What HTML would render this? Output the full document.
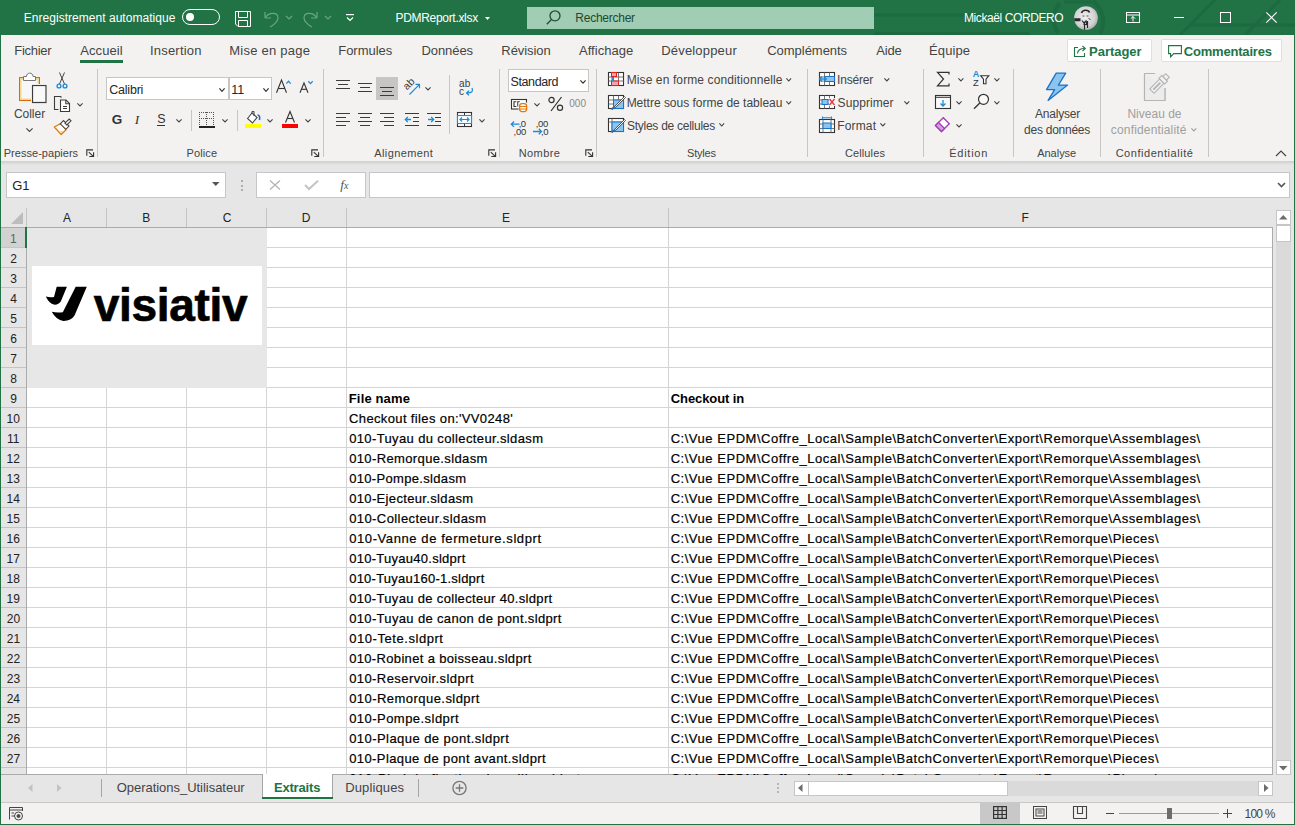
<!DOCTYPE html>
<html><head><meta charset="utf-8"><style>
html,body{margin:0;padding:0;width:1295px;height:825px;overflow:hidden;background:#f3f2f1;font-family:"Liberation Sans", sans-serif}
body>div,body>span,body>svg{position:absolute;box-sizing:border-box}
.t{white-space:pre;line-height:1}
svg{overflow:visible}
</style></head><body>
<div style="left:0px;top:0px;width:1295px;height:35px;background:#217346"></div>
<svg style="left:0px;top:0px;" width="1295" height="35" viewBox="0 0 1295 35"><g stroke="#1d6a40" fill="none" stroke-width="3">
<path d="M874 15 H1010"/>
<path d="M874 33.5 H1030"/>
<path d="M1060 3 A24 24 0 0 0 1058 33" stroke-width="4"/>
<path d="M1093 1 A26 26 0 0 1 1100 34" stroke-width="4"/>
<path d="M1064 2 H1092" stroke-width="3"/>
<path d="M1190 25 H1295"/>
<path d="M1180 35 L1215 0"/><path d="M1245 35 L1280 0"/>
</g></svg>
<span class="t" style="left:23.84px;top:12.19px;font-size:12px;color:#fff;font-weight:400;letter-spacing:0.029px;">Enregistrement automatique</span>
<div style="left:182px;top:9px;width:38px;height:16px;border:1px solid #fff;border-radius:8px"></div>
<div style="left:186px;top:13px;width:8px;height:8px;background:#fff;border-radius:50%"></div>
<svg style="left:235px;top:11px;" width="17" height="17" viewBox="0 0 17 17"><g fill="none" stroke="#fff" stroke-width="1"><path d="M0.5 0.5H15.5V15.5H3L0.5 13Z"/><path d="M3.5 0.5V6.5H12.5V0.5"/><path d="M3.5 15.5V9.5H12.5V15.5"/></g></svg>
<svg style="left:264px;top:11px;" width="70" height="17" viewBox="0 0 70 17"><g fill="none" stroke="#6aa583" stroke-width="1.2"><path d="M1 7 L1 1 M1 7 L7 7"/><path d="M1.5 6.5 C5 1 14 1 14 7 C14 10 10 14 6 16"/><path d="M22 5 L25 8 L28 5"/><path d="M53 7 L53 1 M53 7 L47 7"/><path d="M52.5 6.5 C49 1 40 1 40 7 C40 10 44 14 48 16"/><path d="M61 5 L64 8 L67 5"/></g></svg>
<svg style="left:346px;top:14px;" width="8" height="8" viewBox="0 0 8 8"><g fill="none" stroke="#fff" stroke-width="1.2"><path d="M0 0.6H8"/><path d="M1 3.5 L4 6.5 L7 3.5"/></g></svg>
<span class="t" style="left:395.44px;top:12.19px;font-size:12px;color:#fff;font-weight:400;letter-spacing:-0.305px;">PDMReport.xlsx</span>
<svg style="left:485px;top:17px;" width="6" height="4" viewBox="0 0 6 4"><path d="M0 0H5L2.5 3Z" fill="#fff"/></svg>
<div style="left:527px;top:7px;width:347px;height:22px;background:#a1cdb4"></div>
<svg style="left:546px;top:10px;" width="15" height="15" viewBox="0 0 15 15"><g fill="none" stroke="#1e4d33" stroke-width="1.3"><circle cx="9" cy="5.8" r="5"/><path d="M5.5 9.5 L0.8 14.2"/></g></svg>
<span class="t" style="left:575.34px;top:12.19px;font-size:12px;color:#1c4a31;font-weight:400;letter-spacing:-0.251px;">Rechercher</span>
<span class="t" style="left:964.04px;top:12.19px;font-size:12px;color:#fff;font-weight:400;letter-spacing:-0.414px;">Mickaël CORDERO</span>
<svg style="left:1074px;top:6px;" width="24" height="24" viewBox="0 0 24 24"><defs><radialGradient id="av" cx="45%" cy="45%" r="60%"><stop offset="0" stop-color="#f0f0f0"/><stop offset="0.7" stop-color="#d2d2d2"/><stop offset="1" stop-color="#a8a8a8"/></radialGradient><clipPath id="avc"><circle cx="12" cy="12" r="11.85"/></clipPath></defs>
<circle cx="12" cy="12" r="11.85" fill="url(#av)"/>
<g clip-path="url(#avc)" fill="none" stroke="#2a2a2a">
<path d="M7.5 7 C8.5 3.5 14.5 3.5 15.5 6.5" stroke-width="1.6"/>
<path d="M8.5 10 H10.5 M12.5 10 H14.5" stroke-width="1.2" stroke="#555"/>
<path d="M0 13.8 H6.5" stroke-width="3"/>
<path d="M8 14.5 L10 17 L12 15 L13 19 M13.5 15 V22 M9.5 18.5 H13 M10.5 17 V24" stroke-width="1.2"/>
<path d="M14.5 12 L16.5 14" stroke-width="1" stroke="#444"/>
</g></svg>
<svg style="left:1126px;top:12px;" width="14" height="11" viewBox="0 0 14 11"><g fill="none" stroke="#fff" stroke-width="1"><rect x="0.5" y="0.5" width="13" height="10"/><path d="M0.5 3H13.5"/><path d="M7 9.5V4.5 M4.8 6.7 L7 4.5 L9.2 6.7"/></g></svg>
<svg style="left:1174px;top:17px;" width="10" height="2" viewBox="0 0 10 2"><path d="M0 0.5H10" stroke="#fff" stroke-width="1"/></svg>
<svg style="left:1220px;top:12px;" width="11" height="11" viewBox="0 0 11 11"><rect x="0.5" y="0.5" width="10" height="10" fill="none" stroke="#fff" stroke-width="1"/></svg>
<svg style="left:1266px;top:12px;" width="11" height="11" viewBox="0 0 11 11"><path d="M0.3 0.3L10.7 10.7M10.7 0.3L0.3 10.7" stroke="#fff" stroke-width="1.1"/></svg>
<div style="left:1px;top:35px;width:1293px;height:126px;background:#f3f2f1"></div>
<span class="t" style="left:14.26px;top:44.35px;font-size:13px;color:#444;font-weight:400;letter-spacing:-0.288px;">Fichier</span>
<span class="t" style="left:80.30px;top:44.35px;font-size:13px;color:#444;font-weight:400;letter-spacing:0.070px;">Accueil</span>
<span class="t" style="left:150.03px;top:44.35px;font-size:13px;color:#444;font-weight:400;letter-spacing:0.195px;">Insertion</span>
<span class="t" style="left:229.26px;top:44.35px;font-size:13px;color:#444;font-weight:400;letter-spacing:0.242px;">Mise en page</span>
<span class="t" style="left:338.26px;top:44.35px;font-size:13px;color:#444;font-weight:400;letter-spacing:-0.036px;">Formules</span>
<span class="t" style="left:421.46px;top:44.35px;font-size:13px;color:#444;font-weight:400;letter-spacing:-0.073px;">Données</span>
<span class="t" style="left:501.36px;top:44.35px;font-size:13px;color:#444;font-weight:400;letter-spacing:-0.081px;">Révision</span>
<span class="t" style="left:579.00px;top:44.35px;font-size:13px;color:#444;font-weight:400;letter-spacing:0.021px;">Affichage</span>
<span class="t" style="left:661.26px;top:44.35px;font-size:13px;color:#444;font-weight:400;letter-spacing:0.176px;">Développeur</span>
<span class="t" style="left:767.25px;top:44.35px;font-size:13px;color:#444;font-weight:400;letter-spacing:-0.034px;">Compléments</span>
<span class="t" style="left:876.30px;top:44.35px;font-size:13px;color:#444;font-weight:400;letter-spacing:-0.193px;">Aide</span>
<span class="t" style="left:929.06px;top:44.35px;font-size:13px;color:#444;font-weight:400;letter-spacing:0.106px;">Équipe</span>
<div style="left:80px;top:60px;width:43px;height:3px;background:#217346"></div>
<div style="left:1067px;top:39px;width:85px;height:23px;background:#fff;border:1px solid #e1dfdd;border-radius:2px"></div>
<div style="left:1161px;top:39px;width:121px;height:23px;background:#fff;border:1px solid #e1dfdd;border-radius:2px"></div>
<svg style="left:1073px;top:44px;" width="14" height="14" viewBox="0 0 14 14"><g fill="none" stroke="#217346" stroke-width="1.1"><path d="M5 3.5H1.5V12.5H11.5V9"/><path d="M4.5 9.5 C4.5 6 7.5 4.5 11.5 4.5"/><path d="M9.5 2 L12.3 4.5 L9.5 7"/></g></svg>
<span class="t" style="left:1089.09px;top:44.75px;font-size:13px;color:#217346;font-weight:700;letter-spacing:-0.034px;">Partager</span>
<svg style="left:1168px;top:45px;" width="14" height="13" viewBox="0 0 14 13"><path d="M0.6 0.6H13.4V8.6H5.8L2.6 11.8V8.6H0.6Z" fill="none" stroke="#217346" stroke-width="1.1"/></svg>
<span class="t" style="left:1183.68px;top:44.75px;font-size:13px;color:#217346;font-weight:700;letter-spacing:-0.183px;">Commentaires</span>
<div style="left:97px;top:69px;width:1px;height:88px;background:#c8c6c4"></div>
<div style="left:323px;top:69px;width:1px;height:88px;background:#c8c6c4"></div>
<div style="left:499px;top:69px;width:1px;height:88px;background:#c8c6c4"></div>
<div style="left:596px;top:69px;width:1px;height:88px;background:#c8c6c4"></div>
<div style="left:807px;top:69px;width:1px;height:88px;background:#c8c6c4"></div>
<div style="left:923px;top:69px;width:1px;height:88px;background:#c8c6c4"></div>
<div style="left:1013px;top:69px;width:1px;height:88px;background:#c8c6c4"></div>
<div style="left:1100px;top:69px;width:1px;height:88px;background:#c8c6c4"></div>
<div style="left:1208px;top:69px;width:1px;height:88px;background:#c8c6c4"></div>
<span class="t" style="left:3.72px;top:148.04px;font-size:11px;color:#444;font-weight:400;letter-spacing:0.031px;">Presse-papiers</span>
<span class="t" style="left:186.42px;top:148.04px;font-size:11px;color:#444;font-weight:400;letter-spacing:0.140px;">Police</span>
<span class="t" style="left:374.30px;top:148.04px;font-size:11px;color:#444;font-weight:400;letter-spacing:0.390px;">Alignement</span>
<span class="t" style="left:518.72px;top:148.04px;font-size:11px;color:#444;font-weight:400;letter-spacing:0.414px;">Nombre</span>
<span class="t" style="left:687.05px;top:148.04px;font-size:11px;color:#444;font-weight:400;letter-spacing:-0.206px;">Styles</span>
<span class="t" style="left:844.95px;top:148.04px;font-size:11px;color:#444;font-weight:400;letter-spacing:0.119px;">Cellules</span>
<span class="t" style="left:949.22px;top:148.04px;font-size:11px;color:#444;font-weight:400;letter-spacing:0.748px;">Édition</span>
<span class="t" style="left:1037.20px;top:148.04px;font-size:11px;color:#444;font-weight:400;letter-spacing:-0.018px;">Analyse</span>
<span class="t" style="left:1115.65px;top:148.04px;font-size:11px;color:#444;font-weight:400;letter-spacing:0.540px;">Confidentialité</span>
<svg style="left:86px;top:149px;" width="9" height="9" viewBox="0 0 9 9"><g fill="none" stroke="#333" stroke-width="1.1"><path d="M0.8 6.8V0.9H7"/><path d="M2.8 3.2L7.3 7.3"/><path d="M3.3 7.5H7.6V3.2"/></g></svg>
<svg style="left:311px;top:149px;" width="9" height="9" viewBox="0 0 9 9"><g fill="none" stroke="#333" stroke-width="1.1"><path d="M0.8 6.8V0.9H7"/><path d="M2.8 3.2L7.3 7.3"/><path d="M3.3 7.5H7.6V3.2"/></g></svg>
<svg style="left:488px;top:149px;" width="9" height="9" viewBox="0 0 9 9"><g fill="none" stroke="#333" stroke-width="1.1"><path d="M0.8 6.8V0.9H7"/><path d="M2.8 3.2L7.3 7.3"/><path d="M3.3 7.5H7.6V3.2"/></g></svg>
<svg style="left:585px;top:149px;" width="9" height="9" viewBox="0 0 9 9"><g fill="none" stroke="#333" stroke-width="1.1"><path d="M0.8 6.8V0.9H7"/><path d="M2.8 3.2L7.3 7.3"/><path d="M3.3 7.5H7.6V3.2"/></g></svg>
<svg style="left:12px;top:68px;" width="40" height="40" viewBox="0 0 40 40">
<rect x="7.5" y="9.5" width="20" height="23" fill="#f7d58c" stroke="#d86b07" stroke-width="1"/>
<rect x="9.5" y="12" width="16" height="18.5" fill="#f7f7f7"/>
<path d="M11.5 12.5 V8.5 H14.5 C14.5 4 21 4 21 8.5 H23.5 V12.5 Z" fill="#fff" stroke="#777" stroke-width="1"/>
<rect x="19" y="16" width="16" height="19" fill="#fff"/>
<rect x="20.5" y="17.5" width="13.5" height="17" fill="#f9f9f9" stroke="#3c3c3c" stroke-width="1.2"/>
</svg>
<span class="t" style="left:13.90px;top:108.19px;font-size:12px;color:#444;font-weight:400;letter-spacing:-0.020px;">Coller</span>
<svg style="left:26px;top:128px;" width="7" height="4.5" viewBox="0 0 7 4.5"><path d="M0.4 0.4 L3.5 3.5 L6.6 0.4" fill="none" stroke="#444" stroke-width="1.1"/></svg>
<svg style="left:55px;top:70px;" width="14" height="20" viewBox="0 0 14 20"><g fill="none" stroke="#444" stroke-width="1"><path d="M4.5 2.5 L9.5 14"/><path d="M9.5 2.5 L4.5 14"/></g>
<g fill="none" stroke="#1e8bd8" stroke-width="1.4"><circle cx="4" cy="16" r="1.9"/><circle cx="10" cy="16" r="1.9"/></g></svg>
<svg style="left:53px;top:95px;" width="18" height="18" viewBox="0 0 18 18"><g fill="none" stroke="#3c3c3c" stroke-width="1.1">
<path d="M5.5 14.5 H1.5 V1.5 H7.5 L8.5 2.5"/>
<path d="M7.5 16.5 V5 H13 L16.5 8.5 V16.5 Z" fill="#fff"/>
<path d="M12.8 5 V8.7 H16.5"/>
<path d="M10 11.5 H14 M10 13.5 H14"/></g></svg>
<svg style="left:76.5px;top:103px;" width="6" height="4" viewBox="0 0 6 4"><path d="M0.4 0.4 L3.0 3 L5.6 0.4" fill="none" stroke="#444" stroke-width="1.1"/></svg>
<svg style="left:53px;top:118px;" width="19" height="18" viewBox="0 0 19 18">
<path d="M1.3 9 L8.2 5.3 L13 11.7 L8.2 16.5 Z" fill="#fff" stroke="#e07a10" stroke-width="1.3" stroke-linejoin="round"/>
<path d="M5.5 13.2 L10.8 12.8 L8.2 15.6 Z" fill="#f7d58c"/>
<path d="M7.3 5.8 L10.5 2.6 L16 8.1 L12.8 11.3 Z" fill="#fff" stroke="#444" stroke-width="1.1"/>
<path d="M12 5.2 L16.2 1 L18 2.8 L13.8 7 Z" fill="#fff" stroke="#444" stroke-width="1.1"/>
</svg>
<div style="left:106px;top:77px;width:123px;height:23px;background:#fff;border:1px solid #c8c6c4"></div>
<div style="left:229px;top:77px;width:43px;height:23px;background:#fff;border:1px solid #c8c6c4"></div>
<span class="t" style="left:109.17px;top:83.77px;font-size:12.5px;color:#262626;font-weight:400;letter-spacing:-0.200px;">Calibri</span>
<svg style="left:219.4px;top:87.5px;" width="6" height="4.3" viewBox="0 0 6 4.3"><path d="M0.4 0.4 L3.0 3.3 L5.6 0.4" fill="none" stroke="#333" stroke-width="1.2"/></svg>
<span class="t" style="left:231.30px;top:83.77px;font-size:12.5px;color:#262626;font-weight:400;letter-spacing:0.000px;">11</span>
<svg style="left:262.5px;top:87.5px;" width="6" height="4.3" viewBox="0 0 6 4.3"><path d="M0.4 0.4 L3.0 3.3 L5.6 0.4" fill="none" stroke="#333" stroke-width="1.2"/></svg>
<svg style="left:275px;top:79px;" width="40" height="15" viewBox="0 0 40 15"><g fill="none" stroke="#333" stroke-width="1.1">
<path d="M1.5 13.8 L6.5 1 L11.5 13.8"/><path d="M3.3 9.5 H9.7"/>
<path d="M25 13.8 L29 4 L33 13.8"/><path d="M26.5 10.3 H31.5"/></g>
<g fill="none" stroke="#1e8bd8" stroke-width="1.3"><path d="M11.3 4.6 L13.5 2.3 L15.7 4.6"/><path d="M33.3 2.3 L35.5 4.6 L37.7 2.3"/></g></svg>
<span class="t" style="left:111.86px;top:112.72px;font-size:13.5px;color:#333;font-weight:700;letter-spacing:0.000px;">G</span>
<span class="t" style="left:134.78px;top:112.52px;font-size:13.5px;color:#333;font-weight:400;letter-spacing:0.000px;font-family:'Liberation Serif';font-style:italic">I</span>
<span class="t" style="left:157.18px;top:113.37px;font-size:12.5px;color:#333;font-weight:400;letter-spacing:0.000px;">S</span>
<div style="left:157px;top:125px;width:8px;height:1.2px;background:#333"></div>
<svg style="left:175.5px;top:119px;" width="6" height="4" viewBox="0 0 6 4"><path d="M0.4 0.4 L3.0 3 L5.6 0.4" fill="none" stroke="#444" stroke-width="1.1"/></svg>
<div style="left:191px;top:110px;width:1px;height:21px;background:#c8c6c4"></div>
<div style="left:199px;top:112px;width:1px;height:1px;background:#555"></div>
<div style="left:199px;top:114px;width:1px;height:1px;background:#555"></div>
<div style="left:199px;top:116px;width:1px;height:1px;background:#555"></div>
<div style="left:199px;top:118px;width:1px;height:1px;background:#555"></div>
<div style="left:199px;top:120px;width:1px;height:1px;background:#555"></div>
<div style="left:199px;top:122px;width:1px;height:1px;background:#555"></div>
<div style="left:199px;top:124px;width:1px;height:1px;background:#555"></div>
<div style="left:201px;top:112px;width:1px;height:1px;background:#555"></div>
<div style="left:201px;top:118px;width:1px;height:1px;background:#555"></div>
<div style="left:203px;top:112px;width:1px;height:1px;background:#555"></div>
<div style="left:203px;top:118px;width:1px;height:1px;background:#555"></div>
<div style="left:205px;top:112px;width:1px;height:1px;background:#555"></div>
<div style="left:205px;top:118px;width:1px;height:1px;background:#555"></div>
<div style="left:206px;top:112px;width:1px;height:1px;background:#555"></div>
<div style="left:206px;top:114px;width:1px;height:1px;background:#555"></div>
<div style="left:206px;top:116px;width:1px;height:1px;background:#555"></div>
<div style="left:206px;top:118px;width:1px;height:1px;background:#555"></div>
<div style="left:206px;top:120px;width:1px;height:1px;background:#555"></div>
<div style="left:206px;top:122px;width:1px;height:1px;background:#555"></div>
<div style="left:206px;top:124px;width:1px;height:1px;background:#555"></div>
<div style="left:207px;top:112px;width:1px;height:1px;background:#555"></div>
<div style="left:207px;top:118px;width:1px;height:1px;background:#555"></div>
<div style="left:209px;top:112px;width:1px;height:1px;background:#555"></div>
<div style="left:209px;top:118px;width:1px;height:1px;background:#555"></div>
<div style="left:211px;top:112px;width:1px;height:1px;background:#555"></div>
<div style="left:211px;top:118px;width:1px;height:1px;background:#555"></div>
<div style="left:213px;top:112px;width:1px;height:1px;background:#555"></div>
<div style="left:213px;top:114px;width:1px;height:1px;background:#555"></div>
<div style="left:213px;top:116px;width:1px;height:1px;background:#555"></div>
<div style="left:213px;top:118px;width:1px;height:1px;background:#555"></div>
<div style="left:213px;top:120px;width:1px;height:1px;background:#555"></div>
<div style="left:213px;top:122px;width:1px;height:1px;background:#555"></div>
<div style="left:213px;top:124px;width:1px;height:1px;background:#555"></div>
<div style="left:198.5px;top:126px;width:16px;height:1.5px;background:#222"></div>
<svg style="left:221.6px;top:119px;" width="6" height="4" viewBox="0 0 6 4"><path d="M0.4 0.4 L3.0 3 L5.6 0.4" fill="none" stroke="#444" stroke-width="1.1"/></svg>
<div style="left:237px;top:110px;width:1px;height:21px;background:#c8c6c4"></div>
<svg style="left:244px;top:110px;" width="19" height="19" viewBox="0 0 19 19">
<path d="M3.5 8.5 L8 3 L13 7.5 L8.5 13 Z" fill="#fff" stroke="#444" stroke-width="1.1"/>
<path d="M8 3 V1.5 H10 V6" fill="none" stroke="#444" stroke-width="1"/>
<path d="M13.5 5 C15.5 5 16 7 15.5 10" fill="none" stroke="#1e6fc0" stroke-width="1.6"/>
<rect x="1" y="14" width="16" height="4" fill="#ffff00"/></svg>
<svg style="left:267.3px;top:119px;" width="6" height="4" viewBox="0 0 6 4"><path d="M0.4 0.4 L3.0 3 L5.6 0.4" fill="none" stroke="#444" stroke-width="1.1"/></svg>
<svg style="left:281px;top:110px;" width="18" height="19" viewBox="0 0 18 19"><g fill="none" stroke="#333" stroke-width="1.1"><path d="M4.5 12.5 L9 1.5 L13.5 12.5"/><path d="M6.2 8.5 H11.8"/></g>
<rect x="1" y="14" width="16" height="4" fill="#ff0000"/></svg>
<svg style="left:304.5px;top:119px;" width="6" height="4" viewBox="0 0 6 4"><path d="M0.4 0.4 L3.0 3 L5.6 0.4" fill="none" stroke="#444" stroke-width="1.1"/></svg>
<div style="left:376px;top:77px;width:22px;height:23px;background:#c8c6c4"></div>
<div style="left:336px;top:80px;width:14px;height:1.2px;background:#3c3c3c"></div>
<div style="left:338px;top:84px;width:10px;height:1.2px;background:#3c3c3c"></div>
<div style="left:336px;top:88px;width:14px;height:1.2px;background:#3c3c3c"></div>
<div style="left:358px;top:83px;width:14px;height:1.2px;background:#3c3c3c"></div>
<div style="left:360px;top:87px;width:10px;height:1.2px;background:#3c3c3c"></div>
<div style="left:358px;top:91px;width:14px;height:1.2px;background:#3c3c3c"></div>
<div style="left:380px;top:87px;width:14px;height:1.2px;background:#3c3c3c"></div>
<div style="left:382px;top:91px;width:10px;height:1.2px;background:#3c3c3c"></div>
<div style="left:380px;top:95px;width:14px;height:1.2px;background:#3c3c3c"></div>
<div style="left:336px;top:113px;width:14px;height:1.2px;background:#3c3c3c"></div>
<div style="left:336px;top:117px;width:10px;height:1.2px;background:#3c3c3c"></div>
<div style="left:336px;top:121px;width:14px;height:1.2px;background:#3c3c3c"></div>
<div style="left:336px;top:125px;width:10px;height:1.2px;background:#3c3c3c"></div>
<div style="left:358px;top:113px;width:14px;height:1.2px;background:#3c3c3c"></div>
<div style="left:360px;top:117px;width:10px;height:1.2px;background:#3c3c3c"></div>
<div style="left:358px;top:121px;width:14px;height:1.2px;background:#3c3c3c"></div>
<div style="left:360px;top:125px;width:10px;height:1.2px;background:#3c3c3c"></div>
<div style="left:380px;top:113px;width:14px;height:1.2px;background:#3c3c3c"></div>
<div style="left:384px;top:117px;width:10px;height:1.2px;background:#3c3c3c"></div>
<div style="left:380px;top:121px;width:14px;height:1.2px;background:#3c3c3c"></div>
<div style="left:384px;top:125px;width:10px;height:1.2px;background:#3c3c3c"></div>
<div style="left:405px;top:113px;width:14px;height:1.2px;background:#3c3c3c"></div>
<div style="left:413px;top:117px;width:6px;height:1.2px;background:#3c3c3c"></div>
<div style="left:413px;top:121px;width:6px;height:1.2px;background:#3c3c3c"></div>
<div style="left:405px;top:125px;width:14px;height:1.2px;background:#3c3c3c"></div>
<div style="left:427px;top:113px;width:14px;height:1.2px;background:#3c3c3c"></div>
<div style="left:435px;top:117px;width:6px;height:1.2px;background:#3c3c3c"></div>
<div style="left:435px;top:121px;width:6px;height:1.2px;background:#3c3c3c"></div>
<div style="left:427px;top:125px;width:14px;height:1.2px;background:#3c3c3c"></div>
<svg style="left:403px;top:110px;" width="40" height="19" viewBox="0 0 40 19"><g fill="none" stroke="#1e8bd8" stroke-width="1.3">
<path d="M8 9.5 H2.3 M4.8 7 L2.3 9.5 L4.8 12"/>
<path d="M25 9.5 H30.7 M28.2 7 L30.7 9.5 L28.2 12"/></g></svg>
<svg style="left:402px;top:77px;" width="20" height="20" viewBox="0 0 20 20"><text x="0" y="0" transform="translate(5 13.5) rotate(-45)" font-family="Liberation Sans" font-size="10.5" fill="#3c3c3c">ab</text>
<path d="M7.5 17.5 L17.5 7.3 M13.5 7.3 H17.5 V11.3" fill="none" stroke="#1e8bd8" stroke-width="1.2"/></svg>
<svg style="left:424.7px;top:87px;" width="6" height="4" viewBox="0 0 6 4"><path d="M0.4 0.4 L3.0 3 L5.6 0.4" fill="none" stroke="#444" stroke-width="1.1"/></svg>
<div style="left:449px;top:75px;width:1px;height:59px;background:#c8c6c4"></div>
<svg style="left:457px;top:78px;" width="18" height="19" viewBox="0 0 18 19"><text x="2" y="9.3" font-family="Liberation Sans" font-size="10" fill="#3c3c3c" letter-spacing="0.3">ab</text>
<text x="2" y="16.6" font-family="Liberation Sans" font-size="10" fill="#3c3c3c">c</text>
<path d="M15 10 C16.5 13.5 15 15 10 15 M12 12.6 L9.5 15 L12 17.4" fill="none" stroke="#1e8bd8" stroke-width="1.3"/></svg>
<svg style="left:456px;top:111px;" width="17" height="17" viewBox="0 0 17 17"><rect x="1.5" y="1.5" width="14" height="14" fill="#fff" stroke="#333" stroke-width="1.1"/>
<path d="M8.5 1.5 V4.5 M8.5 12.5 V15.5" stroke="#333" stroke-width="1"/>
<rect x="1.5" y="4.5" width="14" height="8" fill="#fff" stroke="#1e8bd8" stroke-width="1.1"/>
<path d="M4 8.5 H13 M6 6.5 L4 8.5 L6 10.5 M11 6.5 L13 8.5 L11 10.5" fill="none" stroke="#1e8bd8" stroke-width="1.2"/></svg>
<svg style="left:479.4px;top:119px;" width="6" height="4" viewBox="0 0 6 4"><path d="M0.4 0.4 L3.0 3 L5.6 0.4" fill="none" stroke="#444" stroke-width="1.1"/></svg>
<div style="left:508px;top:69px;width:81px;height:23px;background:#fff;border:1px solid #c8c6c4"></div>
<span class="t" style="left:510.57px;top:75.77px;font-size:12.5px;color:#262626;font-weight:400;letter-spacing:-0.407px;">Standard</span>
<svg style="left:579.8px;top:79.6px;" width="6" height="4.1" viewBox="0 0 6 4.1"><path d="M0.4 0.4 L3.0 3.1 L5.6 0.4" fill="none" stroke="#333" stroke-width="1.2"/></svg>
<svg style="left:510px;top:98px;" width="19" height="15" viewBox="0 0 19 15"><rect x="1.5" y="1.5" width="15" height="9.5" fill="#fff" stroke="#333" stroke-width="1.1"/>
<path d="M6.3 3.8 H4 V8.5 H6.3 M9.8 3.8 H7.8 V8.5" fill="none" stroke="#333" stroke-width="1.1"/>
<rect x="8.5" y="4.5" width="9" height="10" fill="#f3f2f1"/>
<rect x="9.6" y="5.6" width="7" height="8" rx="2.5" fill="#fff" stroke="#e07a10" stroke-width="1.3"/>
<path d="M9.8 8.5 H16.4 M9.8 11 H16.4" stroke="#e07a10" stroke-width="1.1"/></svg>
<svg style="left:533.5px;top:102.7px;" width="6" height="4" viewBox="0 0 6 4"><path d="M0.4 0.4 L3.0 3 L5.6 0.4" fill="none" stroke="#444" stroke-width="1.1"/></svg>
<svg style="left:548px;top:96px;" width="16" height="16" viewBox="0 0 16 16"><g fill="none" stroke="#333" stroke-width="1.2"><circle cx="3.5" cy="4" r="2.6"/><circle cx="12" cy="11.8" r="2.6"/><path d="M13.5 1 L3 15"/></g></svg>
<span class="t" style="left:569.20px;top:98.88px;font-size:10px;color:#888;font-weight:400;letter-spacing:0.050px;">000</span>
<svg style="left:509px;top:118px;" width="42" height="18" viewBox="0 0 42 18"><g fill="none" stroke="#1e8bd8" stroke-width="1.3">
<path d="M10.5 6.2 H2.3 M5 3.5 L2.3 6.2 L5 8.9"/>
<path d="M24 13.5 H32.5 M29.8 10.8 L32.5 13.5 L29.8 16.2"/></g></svg>
<span class="t" style="left:518.64px;top:118.81px;font-size:9.5px;color:#333;font-weight:400;letter-spacing:-0.445px;">,0</span>
<span class="t" style="left:513.54px;top:127.01px;font-size:9.5px;color:#333;font-weight:400;letter-spacing:-0.285px;">,00</span>
<span class="t" style="left:535.75px;top:118.81px;font-size:9.5px;color:#333;font-weight:400;letter-spacing:-0.285px;">,00</span>
<span class="t" style="left:540.94px;top:127.01px;font-size:9.5px;color:#333;font-weight:400;letter-spacing:-0.445px;">,0</span>
<svg style="left:607px;top:71px;" width="18" height="16" viewBox="0 0 18 16"><rect x="1.5" y="1.5" width="15" height="13" fill="#fff" stroke="#333" stroke-width="1.1"/>
<path d="M6.5 1.5 V14.5 M11.5 1.5 V14.5 M1.5 6 H16.5 M1.5 10 H16.5" stroke="#666" stroke-width="0.9"/>
<rect x="4.5" y="1.5" width="5" height="4" fill="#f4a3a8" stroke="#e02020" stroke-width="1"/>
<rect x="4.5" y="10" width="7" height="4.5" fill="#f4a3a8" stroke="#e02020" stroke-width="1"/>
<rect x="4.5" y="6" width="2" height="4" fill="#1e8bd8"/></svg>
<svg style="left:607px;top:94px;" width="19" height="16" viewBox="0 0 19 16"><rect x="1.5" y="1.5" width="15" height="13" fill="#fff" stroke="#333" stroke-width="1.1"/>
<path d="M6.5 1.5 V14.5 M11.5 1.5 V14.5 M1.5 6 H16.5 M1.5 10 H16.5" stroke="#666" stroke-width="0.9"/>
<rect x="6.5" y="6" width="10" height="8.5" fill="#8cc4f0" stroke="#1a73c6" stroke-width="1"/>
<path d="M5 15.5 L8 12 L17.5 2.5 L18.5 3.5 L9 13 Z" fill="#fff" stroke="#444" stroke-width="0.9"/>
<path d="M3.5 15.5 C5 13 6.5 12 8 12.5 C8 14 6 15.5 3.5 15.5Z" fill="#1a73c6"/></svg>
<svg style="left:607px;top:117px;" width="19" height="16" viewBox="0 0 19 16"><rect x="1.5" y="1.5" width="15" height="13" fill="#fff" stroke="#333" stroke-width="1.1"/>
<path d="M1.5 5 H16.5 M5 1.5 V14.5" stroke="#666" stroke-width="0.9"/>
<rect x="5" y="5" width="11.5" height="9.5" fill="#8cc4f0" stroke="#1a73c6" stroke-width="1"/>
<path d="M5 15.5 L8 12 L17.5 2.5 L18.5 3.5 L9 13 Z" fill="#fff" stroke="#444" stroke-width="0.9"/>
<path d="M3.5 15.5 C5 13 6.5 12 8 12.5 C8 14 6 15.5 3.5 15.5Z" fill="#1a73c6"/></svg>
<span class="t" style="left:626.64px;top:73.99px;font-size:12px;color:#444;font-weight:400;letter-spacing:0.115px;">Mise en forme conditionnelle</span>
<svg style="left:786.2px;top:77.7px;" width="5.5" height="4" viewBox="0 0 5.5 4"><path d="M0.4 0.4 L2.75 3 L5.1 0.4" fill="none" stroke="#444" stroke-width="1.1"/></svg>
<span class="t" style="left:626.64px;top:96.69px;font-size:12px;color:#444;font-weight:400;letter-spacing:-0.012px;">Mettre sous forme de tableau</span>
<svg style="left:786.2px;top:100.5px;" width="5.5" height="4" viewBox="0 0 5.5 4"><path d="M0.4 0.4 L2.75 3 L5.1 0.4" fill="none" stroke="#444" stroke-width="1.1"/></svg>
<span class="t" style="left:627.00px;top:119.69px;font-size:12px;color:#444;font-weight:400;letter-spacing:-0.264px;">Styles de cellules</span>
<svg style="left:719.2px;top:123.4px;" width="5.5" height="4" viewBox="0 0 5.5 4"><path d="M0.4 0.4 L2.75 3 L5.1 0.4" fill="none" stroke="#444" stroke-width="1.1"/></svg>
<svg style="left:818px;top:71px;" width="18" height="16" viewBox="0 0 18 16"><rect x="1.5" y="1.5" width="15" height="13" fill="#fff" stroke="#333" stroke-width="1.1"/><path d="M6.5 1.5 V14.5 M11.5 1.5 V14.5 M1.5 6 H16.5 M1.5 10 H16.5" stroke="#666" stroke-width="0.9"/><rect x="7" y="5.5" width="9.5" height="5" fill="#8cc4f0" stroke="#1a73c6" stroke-width="1"/>
<path d="M9 8 H1.5 M4 5.5 L1.5 8 L4 10.5" fill="none" stroke="#1e8bd8" stroke-width="1.3"/></svg>
<svg style="left:818px;top:94px;" width="18" height="16" viewBox="0 0 18 16"><rect x="1.5" y="1.5" width="15" height="13" fill="#fff" stroke="#333" stroke-width="1.1"/><path d="M6.5 1.5 V14.5 M11.5 1.5 V14.5 M1.5 6 H16.5 M1.5 10 H16.5" stroke="#666" stroke-width="0.9"/><rect x="4" y="5.5" width="6" height="5" fill="#8cc4f0" stroke="#1a73c6" stroke-width="1"/>
<rect x="11" y="4" width="7" height="8" fill="#f3f2f1"/>
<path d="M11.5 5 L16.5 11 M16.5 5 L11.5 11" stroke="#e8303a" stroke-width="1.2"/></svg>
<svg style="left:818px;top:116px;" width="18" height="17" viewBox="0 0 18 17"><rect x="1.5" y="3.5" width="15" height="13" fill="#fff" stroke="#333" stroke-width="1.1"/>
<path d="M5 3.5 V16.5 M13 3.5 V16.5 M1.5 8 H16.5 M1.5 12.5 H16.5" stroke="#666" stroke-width="0.9"/>
<rect x="5" y="7" width="8" height="5.5" fill="#8cc4f0" stroke="#1a73c6" stroke-width="1"/>
<path d="M4.5 1.8 H13.5 M4.5 0.5 V3 M13.5 0.5 V3" stroke="#1e8bd8" stroke-width="1.1"/></svg>
<span class="t" style="left:837.12px;top:73.99px;font-size:12px;color:#444;font-weight:400;letter-spacing:-0.203px;">Insérer</span>
<svg style="left:883.6px;top:77.9px;" width="5.7" height="4" viewBox="0 0 5.7 4"><path d="M0.4 0.4 L2.85 3 L5.3 0.4" fill="none" stroke="#444" stroke-width="1.1"/></svg>
<span class="t" style="left:837.60px;top:96.69px;font-size:12px;color:#444;font-weight:400;letter-spacing:0.075px;">Supprimer</span>
<svg style="left:903.9px;top:100.7px;" width="5.7" height="4" viewBox="0 0 5.7 4"><path d="M0.4 0.4 L2.85 3 L5.3 0.4" fill="none" stroke="#444" stroke-width="1.1"/></svg>
<span class="t" style="left:837.24px;top:120.19px;font-size:12px;color:#444;font-weight:400;letter-spacing:0.148px;">Format</span>
<svg style="left:879.9px;top:123.3px;" width="5.7" height="4" viewBox="0 0 5.7 4"><path d="M0.4 0.4 L2.85 3 L5.3 0.4" fill="none" stroke="#444" stroke-width="1.1"/></svg>
<svg style="left:936px;top:71px;" width="14" height="16" viewBox="0 0 14 16"><path d="M13 3.5 V1.3 H1.5 L7.5 8 L1.5 14.8 H13 V12.5" fill="none" stroke="#333" stroke-width="1.2"/></svg>
<svg style="left:957.6px;top:78px;" width="5.8" height="3.9" viewBox="0 0 5.8 3.9"><path d="M0.4 0.4 L2.9 2.9 L5.3999999999999995 0.4" fill="none" stroke="#444" stroke-width="1.1"/></svg>
<span class="t" style="left:972.63px;top:70.43px;font-size:9px;color:#1e8bd8;font-weight:700;letter-spacing:0.000px;">A</span>
<span class="t" style="left:972.92px;top:79.28px;font-size:9.3px;color:#333;font-weight:400;letter-spacing:0.000px;">Z</span>
<svg style="left:980px;top:75px;" width="10" height="10" viewBox="0 0 10 10"><path d="M0.7 0.7 H8.8 L6 4.2 V8.8 H3.5 V4.2 Z" fill="#fff" stroke="#333" stroke-width="1.1"/></svg>
<svg style="left:993.5px;top:78px;" width="5.8" height="3.9" viewBox="0 0 5.8 3.9"><path d="M0.4 0.4 L2.9 2.9 L5.3999999999999995 0.4" fill="none" stroke="#444" stroke-width="1.1"/></svg>
<svg style="left:934px;top:94px;" width="18" height="16" viewBox="0 0 18 16"><rect x="1.5" y="1.5" width="15" height="13" fill="#f9f9f9" stroke="#333" stroke-width="1.1"/>
<path d="M1.5 3.3 H16.5" stroke="#333" stroke-width="1"/>
<path d="M9 6 V12 M6.5 9.5 L9 12 L11.5 9.5" fill="none" stroke="#1e8bd8" stroke-width="1.3"/></svg>
<svg style="left:955.6px;top:101px;" width="6" height="3.9" viewBox="0 0 6 3.9"><path d="M0.4 0.4 L3.0 2.9 L5.6 0.4" fill="none" stroke="#444" stroke-width="1.1"/></svg>
<svg style="left:973px;top:93px;" width="17" height="18" viewBox="0 0 17 18"><circle cx="10.5" cy="6.3" r="5" fill="#f9f9f9" stroke="#333" stroke-width="1.2"/><path d="M6.8 10 L1 15.8" stroke="#333" stroke-width="1.3"/></svg>
<svg style="left:993.5px;top:101px;" width="5.8" height="3.9" viewBox="0 0 5.8 3.9"><path d="M0.4 0.4 L2.9 2.9 L5.3999999999999995 0.4" fill="none" stroke="#444" stroke-width="1.1"/></svg>
<svg style="left:934px;top:116px;" width="18" height="18" viewBox="0 0 18 18"><path d="M1.5 9.5 L9.3 1.7 L15.3 7.7 L7.5 15.5 Z" fill="#fff" stroke="#a33cb5" stroke-width="1.3"/>
<path d="M1.5 9.5 L4.5 6.5 L10.5 12.5 L7.5 15.5 Z" fill="#d69ee0" stroke="#a33cb5" stroke-width="1.3"/></svg>
<svg style="left:955.6px;top:124px;" width="6" height="3.9" viewBox="0 0 6 3.9"><path d="M0.4 0.4 L3.0 2.9 L5.6 0.4" fill="none" stroke="#444" stroke-width="1.1"/></svg>
<svg style="left:1045px;top:72px;" width="24" height="30" viewBox="0 0 24 30"><path d="M11.2 1.2 H20.7 L13.4 13.1 H22.6 L3.1 28.4 L9.6 17.6 H1.5 Z" fill="#8cc4f0" stroke="#1a73c6" stroke-width="1.3" stroke-linejoin="round"/></svg>
<span class="t" style="left:1035.10px;top:108.39px;font-size:12px;color:#444;font-weight:400;letter-spacing:-0.237px;">Analyser</span>
<span class="t" style="left:1024.12px;top:123.99px;font-size:12px;color:#444;font-weight:400;letter-spacing:-0.260px;">des données</span>
<svg style="left:1143px;top:70px;" width="30" height="32" viewBox="0 0 30 32"><path d="M1.5 3.5 H12 M1.5 3.5 V30.5 H22 V18" fill="#ececec" stroke="#b4b4b4" stroke-width="1.1"/>
<rect x="1.5" y="3.5" width="20.5" height="27" fill="#ececec" stroke="none" opacity="0.6"/>
<path d="M1.5 3.5 H12 M1.5 3.5 V30.5 H22 V18" fill="none" stroke="#b4b4b4" stroke-width="1.1"/>
<g transform="rotate(-45 16 14)"><rect x="6" y="11" width="14" height="6" fill="#f3f2f1" stroke="#b4b4b4" stroke-width="1.1"/><rect x="8" y="13" width="10" height="2" fill="#b4b4b4"/>
<rect x="20" y="10" width="4" height="8" fill="#f3f2f1" stroke="#b4b4b4" stroke-width="1.1"/><rect x="24" y="11.5" width="4" height="5" fill="#f3f2f1" stroke="#b4b4b4" stroke-width="1.1"/></g></svg>
<span class="t" style="left:1127.44px;top:108.39px;font-size:12px;color:#a19f9d;font-weight:400;letter-spacing:0.005px;">Niveau de</span>
<span class="t" style="left:1110.82px;top:123.99px;font-size:12px;color:#a19f9d;font-weight:400;letter-spacing:0.160px;">confidentialité</span>
<svg style="left:1190.5px;top:127.5px;" width="5.7" height="4" viewBox="0 0 5.7 4"><path d="M0.4 0.4 L2.85 3 L5.3 0.4" fill="none" stroke="#a19f9d" stroke-width="1.1"/></svg>
<svg style="left:1275px;top:150px;" width="12" height="7" viewBox="0 0 12 7"><path d="M1 6 L6 1 L11 6" fill="none" stroke="#444" stroke-width="1.2"/></svg>
<div style="left:1px;top:161px;width:1293px;height:4px;background:linear-gradient(#cfcecd,#e6e6e6)"></div>
<div style="left:1px;top:165px;width:1293px;height:43px;background:#e6e6e6"></div>
<div style="left:6px;top:172px;width:220px;height:26px;background:#fff;border:1px solid #c6c6c6"></div>
<span class="t" style="left:12.35px;top:179.35px;font-size:13px;color:#222;font-weight:400;letter-spacing:-0.120px;">G1</span>
<svg style="left:212px;top:182px;" width="8" height="5" viewBox="0 0 8 5"><path d="M0 0H7.5L3.75 4Z" fill="#555"/></svg>
<div style="left:240.5px;top:180px;width:2px;height:2px;background:#9a9a9a;border-radius:1px"></div>
<div style="left:240.5px;top:184.5px;width:2px;height:2px;background:#9a9a9a;border-radius:1px"></div>
<div style="left:240.5px;top:189px;width:2px;height:2px;background:#9a9a9a;border-radius:1px"></div>
<div style="left:256px;top:172px;width:110px;height:26px;background:#fff;border:1px solid #c6c6c6"></div>
<svg style="left:269px;top:180px;" width="12" height="10" viewBox="0 0 12 10"><path d="M1 0.5L11 9.5M11 0.5L1 9.5" stroke="#b4b4b4" stroke-width="1.3"/></svg>
<svg style="left:304px;top:180px;" width="15" height="10" viewBox="0 0 15 10"><path d="M1 5L5 9L14 0.8" fill="none" stroke="#c4c4c4" stroke-width="2"/></svg>
<span class="t" style="left:340.32px;top:177.92px;font-size:13.5px;color:#555;font-weight:400;letter-spacing:0.000px;font-family:'Liberation Serif';font-weight:400"><i>f</i><i style="font-size:10px">x</i></span>
<div style="left:369px;top:172px;width:921px;height:26px;background:#fff;border:1px solid #c6c6c6"></div>
<svg style="left:1277px;top:182px;" width="9" height="6" viewBox="0 0 9 6"><path d="M1 1L4.5 4.5L8 1" fill="none" stroke="#555" stroke-width="1.6"/></svg>
<div style="left:1px;top:208px;width:1272px;height:19px;background:#e6e6e6"></div>
<div style="left:1px;top:227px;width:1272px;height:1px;background:#ababab"></div>
<svg style="left:11px;top:212px;" width="13" height="12" viewBox="0 0 13 12"><path d="M12 0 V12 H0 Z" fill="#bdbdbd"/></svg>
<div style="left:26px;top:208px;width:1px;height:19px;background:#c4c4c4"></div>
<div style="left:106px;top:208px;width:1px;height:19px;background:#c4c4c4"></div>
<div style="left:186px;top:208px;width:1px;height:19px;background:#c4c4c4"></div>
<div style="left:266px;top:208px;width:1px;height:19px;background:#c4c4c4"></div>
<div style="left:346px;top:208px;width:1px;height:19px;background:#c4c4c4"></div>
<div style="left:668px;top:208px;width:1px;height:19px;background:#c4c4c4"></div>
<span class="t" style="left:63.00px;top:212.19px;font-size:12px;color:#222;font-weight:400;letter-spacing:0.000px;">A</span>
<span class="t" style="left:142.24px;top:212.19px;font-size:12px;color:#222;font-weight:400;letter-spacing:0.000px;">B</span>
<span class="t" style="left:222.80px;top:212.19px;font-size:12px;color:#222;font-weight:400;letter-spacing:0.000px;">C</span>
<span class="t" style="left:301.74px;top:212.19px;font-size:12px;color:#222;font-weight:400;letter-spacing:0.000px;">D</span>
<span class="t" style="left:502.04px;top:212.19px;font-size:12px;color:#222;font-weight:400;letter-spacing:0.000px;">E</span>
<span class="t" style="left:1021.54px;top:212.19px;font-size:12px;color:#222;font-weight:400;letter-spacing:0.000px;">F</span>
<div style="left:27px;top:228px;width:1245px;height:546px;background:#fff"></div>
<div style="left:27px;top:247px;width:1245px;height:1px;background:#d4d4d4"></div>
<div style="left:27px;top:267px;width:1245px;height:1px;background:#d4d4d4"></div>
<div style="left:27px;top:287px;width:1245px;height:1px;background:#d4d4d4"></div>
<div style="left:27px;top:307px;width:1245px;height:1px;background:#d4d4d4"></div>
<div style="left:27px;top:327px;width:1245px;height:1px;background:#d4d4d4"></div>
<div style="left:27px;top:347px;width:1245px;height:1px;background:#d4d4d4"></div>
<div style="left:27px;top:367px;width:1245px;height:1px;background:#d4d4d4"></div>
<div style="left:27px;top:387px;width:1245px;height:1px;background:#d4d4d4"></div>
<div style="left:27px;top:407px;width:1245px;height:1px;background:#d4d4d4"></div>
<div style="left:27px;top:427px;width:1245px;height:1px;background:#d4d4d4"></div>
<div style="left:27px;top:447px;width:1245px;height:1px;background:#d4d4d4"></div>
<div style="left:27px;top:467px;width:1245px;height:1px;background:#d4d4d4"></div>
<div style="left:27px;top:487px;width:1245px;height:1px;background:#d4d4d4"></div>
<div style="left:27px;top:507px;width:1245px;height:1px;background:#d4d4d4"></div>
<div style="left:27px;top:527px;width:1245px;height:1px;background:#d4d4d4"></div>
<div style="left:27px;top:547px;width:1245px;height:1px;background:#d4d4d4"></div>
<div style="left:27px;top:567px;width:1245px;height:1px;background:#d4d4d4"></div>
<div style="left:27px;top:587px;width:1245px;height:1px;background:#d4d4d4"></div>
<div style="left:27px;top:607px;width:1245px;height:1px;background:#d4d4d4"></div>
<div style="left:27px;top:627px;width:1245px;height:1px;background:#d4d4d4"></div>
<div style="left:27px;top:647px;width:1245px;height:1px;background:#d4d4d4"></div>
<div style="left:27px;top:667px;width:1245px;height:1px;background:#d4d4d4"></div>
<div style="left:27px;top:687px;width:1245px;height:1px;background:#d4d4d4"></div>
<div style="left:27px;top:707px;width:1245px;height:1px;background:#d4d4d4"></div>
<div style="left:27px;top:727px;width:1245px;height:1px;background:#d4d4d4"></div>
<div style="left:27px;top:747px;width:1245px;height:1px;background:#d4d4d4"></div>
<div style="left:27px;top:767px;width:1245px;height:1px;background:#d4d4d4"></div>
<div style="left:106px;top:228px;width:1px;height:546px;background:#d4d4d4"></div>
<div style="left:186px;top:228px;width:1px;height:546px;background:#d4d4d4"></div>
<div style="left:266px;top:228px;width:1px;height:546px;background:#d4d4d4"></div>
<div style="left:346px;top:228px;width:1px;height:546px;background:#d4d4d4"></div>
<div style="left:668px;top:228px;width:1px;height:546px;background:#d4d4d4"></div>
<div style="left:1272px;top:227px;width:1px;height:548px;background:#ababab"></div>
<div style="left:1px;top:774px;width:1272px;height:1px;background:#ababab"></div>
<div style="left:1px;top:228px;width:25px;height:546px;background:#e6e6e6"></div>
<div style="left:1px;top:228px;width:25px;height:19px;background:#d2d2d2"></div>
<div style="left:1px;top:247px;width:25px;height:1px;background:#c4c4c4"></div>
<div style="left:1px;top:267px;width:25px;height:1px;background:#c4c4c4"></div>
<div style="left:1px;top:287px;width:25px;height:1px;background:#c4c4c4"></div>
<div style="left:1px;top:307px;width:25px;height:1px;background:#c4c4c4"></div>
<div style="left:1px;top:327px;width:25px;height:1px;background:#c4c4c4"></div>
<div style="left:1px;top:347px;width:25px;height:1px;background:#c4c4c4"></div>
<div style="left:1px;top:367px;width:25px;height:1px;background:#c4c4c4"></div>
<div style="left:1px;top:387px;width:25px;height:1px;background:#c4c4c4"></div>
<div style="left:1px;top:407px;width:25px;height:1px;background:#c4c4c4"></div>
<div style="left:1px;top:427px;width:25px;height:1px;background:#c4c4c4"></div>
<div style="left:1px;top:447px;width:25px;height:1px;background:#c4c4c4"></div>
<div style="left:1px;top:467px;width:25px;height:1px;background:#c4c4c4"></div>
<div style="left:1px;top:487px;width:25px;height:1px;background:#c4c4c4"></div>
<div style="left:1px;top:507px;width:25px;height:1px;background:#c4c4c4"></div>
<div style="left:1px;top:527px;width:25px;height:1px;background:#c4c4c4"></div>
<div style="left:1px;top:547px;width:25px;height:1px;background:#c4c4c4"></div>
<div style="left:1px;top:567px;width:25px;height:1px;background:#c4c4c4"></div>
<div style="left:1px;top:587px;width:25px;height:1px;background:#c4c4c4"></div>
<div style="left:1px;top:607px;width:25px;height:1px;background:#c4c4c4"></div>
<div style="left:1px;top:627px;width:25px;height:1px;background:#c4c4c4"></div>
<div style="left:1px;top:647px;width:25px;height:1px;background:#c4c4c4"></div>
<div style="left:1px;top:667px;width:25px;height:1px;background:#c4c4c4"></div>
<div style="left:1px;top:687px;width:25px;height:1px;background:#c4c4c4"></div>
<div style="left:1px;top:707px;width:25px;height:1px;background:#c4c4c4"></div>
<div style="left:1px;top:727px;width:25px;height:1px;background:#c4c4c4"></div>
<div style="left:1px;top:747px;width:25px;height:1px;background:#c4c4c4"></div>
<div style="left:1px;top:767px;width:25px;height:1px;background:#c4c4c4"></div>
<div style="left:26px;top:228px;width:1px;height:546px;background:#ababab"></div>
<div style="left:25px;top:227px;width:2px;height:21px;background:#217346"></div>
<span class="t" style="left:9.96px;top:233.19px;font-size:12px;color:#4e6b59;font-weight:400;letter-spacing:0.000px;">1</span>
<span class="t" style="left:10.14px;top:253.19px;font-size:12px;color:#222;font-weight:400;letter-spacing:0.000px;">2</span>
<span class="t" style="left:10.20px;top:273.19px;font-size:12px;color:#222;font-weight:400;letter-spacing:0.000px;">3</span>
<span class="t" style="left:10.20px;top:293.19px;font-size:12px;color:#222;font-weight:400;letter-spacing:0.000px;">4</span>
<span class="t" style="left:10.14px;top:313.19px;font-size:12px;color:#222;font-weight:400;letter-spacing:0.000px;">5</span>
<span class="t" style="left:10.14px;top:333.19px;font-size:12px;color:#222;font-weight:400;letter-spacing:0.000px;">6</span>
<span class="t" style="left:10.14px;top:353.19px;font-size:12px;color:#222;font-weight:400;letter-spacing:0.000px;">7</span>
<span class="t" style="left:10.20px;top:373.19px;font-size:12px;color:#222;font-weight:400;letter-spacing:0.000px;">8</span>
<span class="t" style="left:10.14px;top:393.19px;font-size:12px;color:#222;font-weight:400;letter-spacing:0.000px;">9</span>
<span class="t" style="left:6.54px;top:413.19px;font-size:12px;color:#222;font-weight:400;letter-spacing:0.000px;">10</span>
<span class="t" style="left:7.08px;top:433.19px;font-size:12px;color:#222;font-weight:400;letter-spacing:0.000px;">11</span>
<span class="t" style="left:6.60px;top:453.19px;font-size:12px;color:#222;font-weight:400;letter-spacing:0.000px;">12</span>
<span class="t" style="left:6.60px;top:473.19px;font-size:12px;color:#222;font-weight:400;letter-spacing:0.000px;">13</span>
<span class="t" style="left:6.48px;top:493.19px;font-size:12px;color:#222;font-weight:400;letter-spacing:0.000px;">14</span>
<span class="t" style="left:6.54px;top:513.19px;font-size:12px;color:#222;font-weight:400;letter-spacing:0.000px;">15</span>
<span class="t" style="left:6.60px;top:533.19px;font-size:12px;color:#222;font-weight:400;letter-spacing:0.000px;">16</span>
<span class="t" style="left:6.60px;top:553.19px;font-size:12px;color:#222;font-weight:400;letter-spacing:0.000px;">17</span>
<span class="t" style="left:6.60px;top:573.19px;font-size:12px;color:#222;font-weight:400;letter-spacing:0.000px;">18</span>
<span class="t" style="left:6.60px;top:593.19px;font-size:12px;color:#222;font-weight:400;letter-spacing:0.000px;">19</span>
<span class="t" style="left:6.72px;top:613.19px;font-size:12px;color:#222;font-weight:400;letter-spacing:0.000px;">20</span>
<span class="t" style="left:6.78px;top:633.19px;font-size:12px;color:#222;font-weight:400;letter-spacing:0.000px;">21</span>
<span class="t" style="left:6.78px;top:653.19px;font-size:12px;color:#222;font-weight:400;letter-spacing:0.000px;">22</span>
<span class="t" style="left:6.78px;top:673.19px;font-size:12px;color:#222;font-weight:400;letter-spacing:0.000px;">23</span>
<span class="t" style="left:6.66px;top:693.19px;font-size:12px;color:#222;font-weight:400;letter-spacing:0.000px;">24</span>
<span class="t" style="left:6.72px;top:713.19px;font-size:12px;color:#222;font-weight:400;letter-spacing:0.000px;">25</span>
<span class="t" style="left:6.78px;top:733.19px;font-size:12px;color:#222;font-weight:400;letter-spacing:0.000px;">26</span>
<span class="t" style="left:6.78px;top:753.19px;font-size:12px;color:#222;font-weight:400;letter-spacing:0.000px;">27</span>
<div style="left:27px;top:228px;width:240px;height:160px;background:#e7e7e7"></div>
<div style="left:32px;top:266px;width:230px;height:79px;background:#fff"></div>
<span class="t" style="left:348.79px;top:392.35px;font-size:13px;color:#000;font-weight:700;letter-spacing:0.146px;">File name</span>
<span class="t" style="left:670.78px;top:392.35px;font-size:13px;color:#000;font-weight:700;letter-spacing:-0.096px;">Checkout in</span>
<span class="t" style="left:349.05px;top:412.35px;font-size:13px;color:#000;font-weight:400;letter-spacing:0.365px;-webkit-text-stroke:0.2px #000">Checkout files on:'VV0248'</span>
<span class="t" style="left:349.18px;top:432.35px;font-size:13px;color:#000;font-weight:400;letter-spacing:0.371px;-webkit-text-stroke:0.2px #000">010-Tuyau du collecteur.sldasm</span>
<span class="t" style="left:670.65px;top:432.35px;font-size:13px;color:#000;font-weight:400;letter-spacing:0.535px;-webkit-text-stroke:0.2px #000">C:\Vue EPDM\Coffre_Local\Sample\BatchConverter\Export\Remorque\Assemblages\</span>
<span class="t" style="left:349.18px;top:452.35px;font-size:13px;color:#000;font-weight:400;letter-spacing:0.371px;-webkit-text-stroke:0.2px #000">010-Remorque.sldasm</span>
<span class="t" style="left:670.65px;top:452.35px;font-size:13px;color:#000;font-weight:400;letter-spacing:0.535px;-webkit-text-stroke:0.2px #000">C:\Vue EPDM\Coffre_Local\Sample\BatchConverter\Export\Remorque\Assemblages\</span>
<span class="t" style="left:349.18px;top:472.35px;font-size:13px;color:#000;font-weight:400;letter-spacing:0.325px;-webkit-text-stroke:0.2px #000">010-Pompe.sldasm</span>
<span class="t" style="left:670.65px;top:472.35px;font-size:13px;color:#000;font-weight:400;letter-spacing:0.535px;-webkit-text-stroke:0.2px #000">C:\Vue EPDM\Coffre_Local\Sample\BatchConverter\Export\Remorque\Assemblages\</span>
<span class="t" style="left:349.18px;top:492.35px;font-size:13px;color:#000;font-weight:400;letter-spacing:0.346px;-webkit-text-stroke:0.2px #000">010-Ejecteur.sldasm</span>
<span class="t" style="left:670.65px;top:492.35px;font-size:13px;color:#000;font-weight:400;letter-spacing:0.535px;-webkit-text-stroke:0.2px #000">C:\Vue EPDM\Coffre_Local\Sample\BatchConverter\Export\Remorque\Assemblages\</span>
<span class="t" style="left:349.18px;top:512.35px;font-size:13px;color:#000;font-weight:400;letter-spacing:0.412px;-webkit-text-stroke:0.2px #000">010-Collecteur.sldasm</span>
<span class="t" style="left:670.65px;top:512.35px;font-size:13px;color:#000;font-weight:400;letter-spacing:0.535px;-webkit-text-stroke:0.2px #000">C:\Vue EPDM\Coffre_Local\Sample\BatchConverter\Export\Remorque\Assemblages\</span>
<span class="t" style="left:349.18px;top:532.35px;font-size:13px;color:#000;font-weight:400;letter-spacing:0.589px;-webkit-text-stroke:0.2px #000">010-Vanne de fermeture.sldprt</span>
<span class="t" style="left:670.65px;top:532.35px;font-size:13px;color:#000;font-weight:400;letter-spacing:0.536px;-webkit-text-stroke:0.2px #000">C:\Vue EPDM\Coffre_Local\Sample\BatchConverter\Export\Remorque\Pieces\</span>
<span class="t" style="left:349.18px;top:552.35px;font-size:13px;color:#000;font-weight:400;letter-spacing:0.271px;-webkit-text-stroke:0.2px #000">010-Tuyau40.sldprt</span>
<span class="t" style="left:670.65px;top:552.35px;font-size:13px;color:#000;font-weight:400;letter-spacing:0.536px;-webkit-text-stroke:0.2px #000">C:\Vue EPDM\Coffre_Local\Sample\BatchConverter\Export\Remorque\Pieces\</span>
<span class="t" style="left:349.18px;top:572.35px;font-size:13px;color:#000;font-weight:400;letter-spacing:0.238px;-webkit-text-stroke:0.2px #000">010-Tuyau160-1.sldprt</span>
<span class="t" style="left:670.65px;top:572.35px;font-size:13px;color:#000;font-weight:400;letter-spacing:0.536px;-webkit-text-stroke:0.2px #000">C:\Vue EPDM\Coffre_Local\Sample\BatchConverter\Export\Remorque\Pieces\</span>
<span class="t" style="left:349.18px;top:592.35px;font-size:13px;color:#000;font-weight:400;letter-spacing:0.329px;-webkit-text-stroke:0.2px #000">010-Tuyau de collecteur 40.sldprt</span>
<span class="t" style="left:670.65px;top:592.35px;font-size:13px;color:#000;font-weight:400;letter-spacing:0.536px;-webkit-text-stroke:0.2px #000">C:\Vue EPDM\Coffre_Local\Sample\BatchConverter\Export\Remorque\Pieces\</span>
<span class="t" style="left:349.18px;top:612.35px;font-size:13px;color:#000;font-weight:400;letter-spacing:0.345px;-webkit-text-stroke:0.2px #000">010-Tuyau de canon de pont.sldprt</span>
<span class="t" style="left:670.65px;top:612.35px;font-size:13px;color:#000;font-weight:400;letter-spacing:0.536px;-webkit-text-stroke:0.2px #000">C:\Vue EPDM\Coffre_Local\Sample\BatchConverter\Export\Remorque\Pieces\</span>
<span class="t" style="left:349.18px;top:632.35px;font-size:13px;color:#000;font-weight:400;letter-spacing:0.556px;-webkit-text-stroke:0.2px #000">010-Tete.sldprt</span>
<span class="t" style="left:670.65px;top:632.35px;font-size:13px;color:#000;font-weight:400;letter-spacing:0.536px;-webkit-text-stroke:0.2px #000">C:\Vue EPDM\Coffre_Local\Sample\BatchConverter\Export\Remorque\Pieces\</span>
<span class="t" style="left:349.18px;top:652.35px;font-size:13px;color:#000;font-weight:400;letter-spacing:0.335px;-webkit-text-stroke:0.2px #000">010-Robinet a boisseau.sldprt</span>
<span class="t" style="left:670.65px;top:652.35px;font-size:13px;color:#000;font-weight:400;letter-spacing:0.536px;-webkit-text-stroke:0.2px #000">C:\Vue EPDM\Coffre_Local\Sample\BatchConverter\Export\Remorque\Pieces\</span>
<span class="t" style="left:349.18px;top:672.35px;font-size:13px;color:#000;font-weight:400;letter-spacing:0.421px;-webkit-text-stroke:0.2px #000">010-Reservoir.sldprt</span>
<span class="t" style="left:670.65px;top:672.35px;font-size:13px;color:#000;font-weight:400;letter-spacing:0.536px;-webkit-text-stroke:0.2px #000">C:\Vue EPDM\Coffre_Local\Sample\BatchConverter\Export\Remorque\Pieces\</span>
<span class="t" style="left:349.18px;top:692.35px;font-size:13px;color:#000;font-weight:400;letter-spacing:0.453px;-webkit-text-stroke:0.2px #000">010-Remorque.sldprt</span>
<span class="t" style="left:670.65px;top:692.35px;font-size:13px;color:#000;font-weight:400;letter-spacing:0.536px;-webkit-text-stroke:0.2px #000">C:\Vue EPDM\Coffre_Local\Sample\BatchConverter\Export\Remorque\Pieces\</span>
<span class="t" style="left:349.18px;top:712.35px;font-size:13px;color:#000;font-weight:400;letter-spacing:0.459px;-webkit-text-stroke:0.2px #000">010-Pompe.sldprt</span>
<span class="t" style="left:670.65px;top:712.35px;font-size:13px;color:#000;font-weight:400;letter-spacing:0.536px;-webkit-text-stroke:0.2px #000">C:\Vue EPDM\Coffre_Local\Sample\BatchConverter\Export\Remorque\Pieces\</span>
<span class="t" style="left:349.18px;top:732.35px;font-size:13px;color:#000;font-weight:400;letter-spacing:0.446px;-webkit-text-stroke:0.2px #000">010-Plaque de pont.sldprt</span>
<span class="t" style="left:670.65px;top:732.35px;font-size:13px;color:#000;font-weight:400;letter-spacing:0.536px;-webkit-text-stroke:0.2px #000">C:\Vue EPDM\Coffre_Local\Sample\BatchConverter\Export\Remorque\Pieces\</span>
<span class="t" style="left:349.18px;top:752.35px;font-size:13px;color:#000;font-weight:400;letter-spacing:0.407px;-webkit-text-stroke:0.2px #000">010-Plaque de pont avant.sldprt</span>
<span class="t" style="left:670.65px;top:752.35px;font-size:13px;color:#000;font-weight:400;letter-spacing:0.536px;-webkit-text-stroke:0.2px #000">C:\Vue EPDM\Coffre_Local\Sample\BatchConverter\Export\Remorque\Pieces\</span>
<span class="t" style="left:349.18px;top:772.35px;font-size:13px;color:#000;font-weight:400;letter-spacing:0.694px;-webkit-text-stroke:0.2px #000">010-Pied de fixation du collier.sldprt</span>
<span class="t" style="left:670.65px;top:772.35px;font-size:13px;color:#000;font-weight:400;letter-spacing:0.536px;-webkit-text-stroke:0.2px #000">C:\Vue EPDM\Coffre_Local\Sample\BatchConverter\Export\Remorque\Pieces\</span>
<div style="left:1px;top:775px;width:1293px;height:28px;background:#e6e6e6"></div>
<div style="left:1273px;top:208px;width:21px;height:567px;background:#e6e6e6"></div>
<div style="left:1276px;top:241px;width:15px;height:520px;background:#dadada"></div>
<div style="left:1276px;top:210px;width:15px;height:15px;background:#fff;border:1px solid #c6c6c6"></div>
<svg style="left:1279px;top:215px;" width="9" height="5" viewBox="0 0 9 5"><path d="M0 4.5H8.5L4.25 0Z" fill="#6d6d6d"/></svg>
<div style="left:1276px;top:225px;width:15px;height:17px;background:#fff;border:1px solid #c6c6c6"></div>
<div style="left:1276px;top:760px;width:15px;height:15px;background:#fff;border:1px solid #c6c6c6"></div>
<svg style="left:1279px;top:766px;" width="9" height="5" viewBox="0 0 9 5"><path d="M0 0H8.5L4.25 4.5Z" fill="#6d6d6d"/></svg>
<div style="left:1px;top:775px;width:1293px;height:27px;background:#e6e6e6"></div>
<div style="left:1px;top:802px;width:1293px;height:1px;background:#c8c8c8"></div>
<svg style="left:28px;top:784px;" width="5" height="8" viewBox="0 0 5 8"><path d="M4.5 0V8L0 4Z" fill="#c2c2c2"/></svg>
<svg style="left:57px;top:784px;" width="5" height="8" viewBox="0 0 5 8"><path d="M0 0V8L4.5 4Z" fill="#c2c2c2"/></svg>
<div style="left:101px;top:779px;width:1px;height:18px;background:#a6a6a6"></div>
<span class="t" style="left:116.65px;top:781.35px;font-size:13px;color:#444;font-weight:400;letter-spacing:-0.028px;">Operations_Utilisateur</span>
<div style="left:262px;top:774px;width:71px;height:25px;background:#fff;border-left:1px solid #a6a6a6;border-right:1px solid #a6a6a6"></div>
<div style="left:262px;top:797px;width:71px;height:2px;background:#217346"></div>
<span class="t" style="left:273.89px;top:781.35px;font-size:13px;color:#217346;font-weight:700;letter-spacing:-0.169px;">Extraits</span>
<span class="t" style="left:345.16px;top:781.35px;font-size:13px;color:#444;font-weight:400;letter-spacing:0.139px;">Dupliques</span>
<div style="left:418px;top:779px;width:1px;height:18px;background:#a6a6a6"></div>
<svg style="left:451px;top:781px;" width="18" height="14" viewBox="0 0 18 14"><g fill="none" stroke="#777" stroke-width="1.3"><circle cx="8.5" cy="7" r="6.6"/><path d="M8.5 3.2V10.8M4.7 7H12.3"/></g></svg>
<div style="left:777px;top:783px;width:2px;height:2px;background:#a6a6a6;border-radius:1px"></div>
<div style="left:777px;top:787px;width:2px;height:2px;background:#a6a6a6;border-radius:1px"></div>
<div style="left:777px;top:791px;width:2px;height:2px;background:#a6a6a6;border-radius:1px"></div>
<div style="left:794px;top:781px;width:465px;height:15px;background:#dadada"></div>
<div style="left:794px;top:781px;width:15px;height:15px;background:#fff;border:1px solid #c6c6c6"></div>
<svg style="left:798px;top:784px;" width="5" height="8" viewBox="0 0 5 8"><path d="M4.5 0V8L0 4Z" fill="#6d6d6d"/></svg>
<div style="left:808px;top:781px;width:200px;height:15px;background:#fff;border:1px solid #c6c6c6"></div>
<div style="left:1258px;top:781px;width:15px;height:15px;background:#fff;border:1px solid #c6c6c6"></div>
<svg style="left:1264px;top:784px;" width="5" height="8" viewBox="0 0 5 8"><path d="M0 0V8L4.5 4Z" fill="#6d6d6d"/></svg>
<div style="left:1px;top:803px;width:1293px;height:21px;background:#f3f2f1"></div>
<svg style="left:9px;top:807px;" width="15" height="14" viewBox="0 0 15 14"><g fill="none" stroke="#444" stroke-width="1"><path d="M0.5 12.5V0.5H13.5V4"/><path d="M0.5 3H13.5"/><path d="M2.5 6H5M2.5 9H5"/><circle cx="9.5" cy="9" r="4"/><circle cx="9.5" cy="9" r="1.5" fill="#444"/></g></svg>
<div style="left:980px;top:803px;width:40px;height:21px;background:#c8c8c8"></div>
<svg style="left:993px;top:806px;" width="14" height="13" viewBox="0 0 14 13"><g fill="none" stroke="#333" stroke-width="1.2"><rect x="0.6" y="0.6" width="12.8" height="11.8"/><path d="M4.9 0.6V12.4M9.1 0.6V12.4M0.6 4.5H13.4M0.6 8.5H13.4"/></g></svg>
<svg style="left:1033px;top:806px;" width="14" height="13" viewBox="0 0 14 13"><g fill="none" stroke="#444" stroke-width="1"><rect x="0.5" y="0.5" width="13" height="12"/><rect x="3" y="3" width="8" height="7"/><path d="M4.5 5H9.5M4.5 7H9.5"/></g></svg>
<svg style="left:1073px;top:806px;" width="14" height="13" viewBox="0 0 14 13"><g fill="none" stroke="#444" stroke-width="1.1"><path d="M0.5 12.5V0.5H13.5V12.5H0.5"/><path d="M4.5 0.5V7.5H9.5V0.5"/></g></svg>
<div style="left:1106px;top:813px;width:8px;height:1px;background:#444"></div>
<div style="left:1119px;top:813px;width:100px;height:1px;background:#9b9b9b"></div>
<div style="left:1167px;top:808px;width:5px;height:11px;background:#6d6d6d"></div>
<div style="left:1223px;top:813px;width:9px;height:1px;background:#444"></div>
<div style="left:1227px;top:809px;width:1px;height:9px;background:#444"></div>
<span class="t" style="left:1244.54px;top:808.19px;font-size:12px;color:#444;font-weight:400;letter-spacing:-0.810px;">100 %</span>
<div style="left:0px;top:35px;width:1px;height:790px;background:#217346"></div>
<div style="left:1294px;top:35px;width:1px;height:790px;background:#217346"></div>
<div style="left:0px;top:824px;width:1295px;height:1px;background:#217346"></div>
<svg style="left:32px;top:266px;" width="230" height="79" viewBox="0 0 230 79"><g transform="translate(-32 -266)" fill="#000">
<path d="M56.7 286.7 H66.9 L60.8 301.5 Q58.5 305 53.9 304.6 Q49.5 304 45.8 296.5 Q50 297.6 54 296.9 Z"/>
<path d="M75.7 286.7 H86.8 L74.5 315.5 Q71 321 63.5 320.9 Q56 320 51.8 311.8 Q57 313.2 62.8 312.2 Z"/>
</g></svg>
<span class="t" style="left:93.80px;top:282.21px;font-size:46px;color:#000;font-weight:700;letter-spacing:-0.326px;-webkit-text-stroke:0.7px #000">visiativ</span>
</body></html>
